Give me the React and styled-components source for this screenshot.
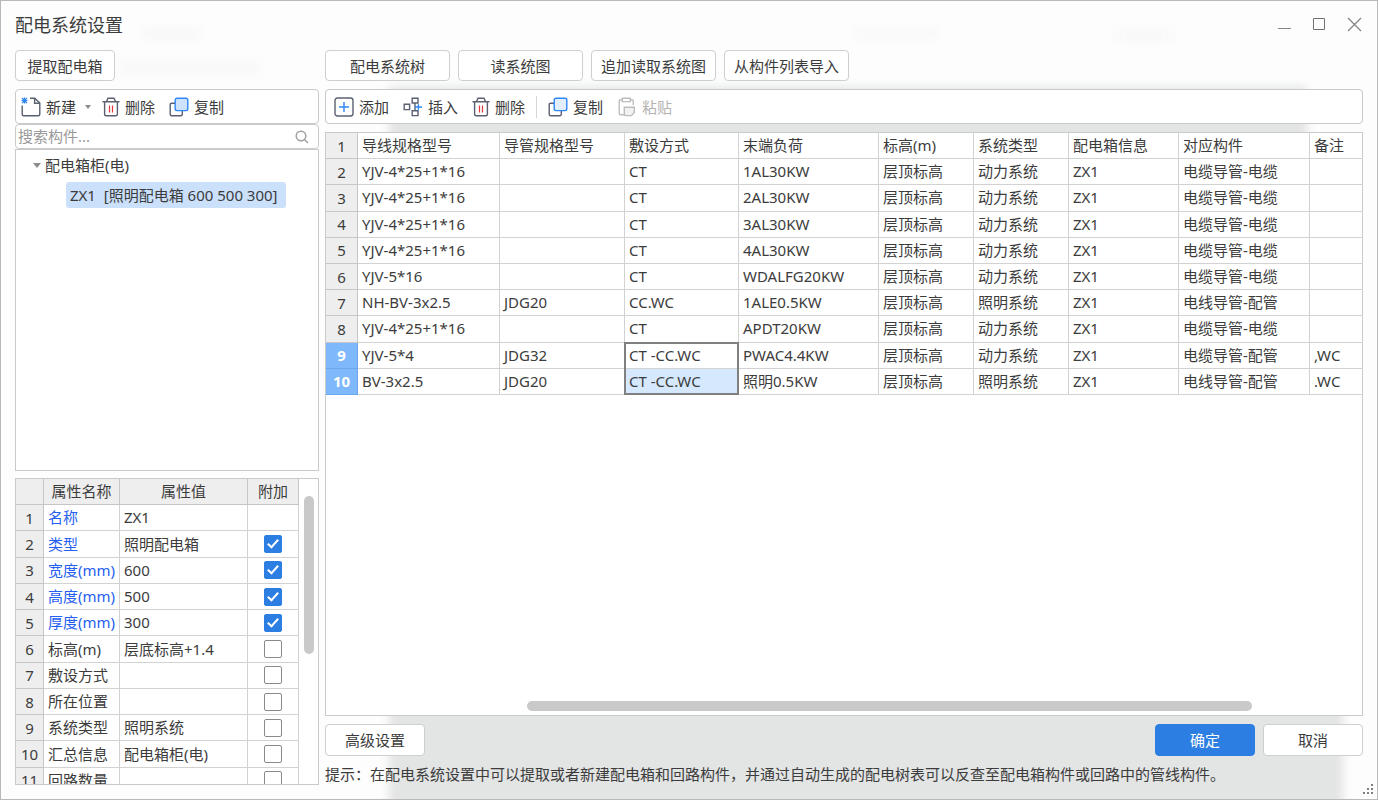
import React, { useState } from "react";
import styled, { createGlobalStyle, css } from "styled-components";

const GlobalStyle = createGlobalStyle`
  *, *::before, *::after { box-sizing: border-box; }
  body {
    margin: 0;
    background: #fff;
    color: #3c3c3c;
    font: 15px/20px "Noto Sans", "Noto Sans CJK SC", sans-serif;
  }
  button, input { font: inherit; color: inherit; }
`;

const LINE = "#d2d2d2";
const EDGE = "#c8cacb";

const Dialog = styled.main`
  position: relative;
  isolation: isolate;
  overflow: hidden;
  height: 100vh;
  display: flex;
  flex-direction: column;
  padding: 0 14px 14px;
  border: 1px solid #b9b9b9;
  background: #fdfdfd;
`;

const Haze = styled.div`
  position: absolute;
  z-index: -1;
  inset: ${(p) => p.$inset};
  width: ${(p) => (p.$width ? `${p.$width}px` : "auto")};
  height: ${(p) => (p.$height ? `${p.$height}px` : "auto")};
  background: ${(p) => p.$color || "#e3e4e4"};
  filter: blur(5px);
`;

const TitleBar = styled.header`
  display: flex;
  align-items: center;
  justify-content: space-between;
  height: 49px;
  flex: none;
  padding: 0 1px 2px 0;
`;

const Title = styled.h1`
  margin: 0;
  font-size: 18px;
  line-height: 24px;
  font-weight: 400;
`;

const WindowControls = styled.div`
  display: flex;
  gap: 20px;
`;

const ControlButton = styled.button`
  width: 15px;
  height: 15px;
  padding: 0;
  border: 0;
  background: none;
  svg { display: block; }
`;

const Columns = styled.div`
  flex: 1;
  min-height: 0;
  display: flex;
  gap: 6px;
`;

const LeftColumn = styled.section`
  width: 304px;
  flex: none;
  display: flex;
  flex-direction: column;
`;

const RightColumn = styled.section`
  flex: 1;
  min-width: 0;
  display: flex;
  flex-direction: column;
  gap: 8px;
`;

const ButtonRow = styled.div`
  display: flex;
  gap: 8px;
  margin-bottom: ${(p) => (p.$spaced ? 8 : 0)}px;
`;

const PushButton = styled.button`
  min-width: ${(p) => (p.$wide ? 125 : 100)}px;
  height: ${(p) => (p.$tall ? 32 : 31)}px;
  padding: 0 8px;
  border: 1px solid ${(p) => (p.$primary ? "#2c7ee2" : "#cdcfd0")};
  border-radius: 4px;
  background: ${(p) => (p.$primary ? "#2c7ee2" : "#fff")};
  color: ${(p) => (p.$primary ? "#fff" : "inherit")};
  white-space: nowrap;
`;

const Toolbar = styled.div`
  display: flex;
  align-items: center;
  gap: 14px;
  height: 35px;
  flex: none;
  padding: 0 5px 0 ${(p) => (p.$inset ? 8 : 5)}px;
  border: 1px solid ${EDGE};
  border-radius: 4px;
  background: #fff;
`;

const ToolButton = styled.button`
  display: flex;
  align-items: center;
  gap: 5px;
  padding: 0;
  border: 0;
  background: none;
  white-space: nowrap;
  &:disabled { color: #b4b4b4; }
`;

const NewButton = styled(ToolButton)`
  margin-right: -3px;
`;

const Caret = styled.span`
  border: ${(p) => (p.$menu ? 3 : 4)}px solid transparent;
  border-top: ${(p) => (p.$menu ? 4 : 5)}px solid #8c8c8c;
  border-bottom: 0;
  margin-left: ${(p) => (p.$menu ? 4 : 0)}px;
`;

const Separator = styled.span`
  width: 1px;
  height: 22px;
  margin: 0 -3px;
  background: #d6d6d6;
`;

const SearchBox = styled.label`
  display: flex;
  align-items: center;
  height: 25px;
  flex: none;
  padding: 0 9px 0 2px;
  border: 1px solid ${EDGE};
  border-radius: 4px;
  background: #fff;
`;

const SearchInput = styled.input`
  flex: 1;
  min-width: 0;
  height: 22px;
  padding: 0 0 2px;
  border: 0;
  outline: 0;
  background: none;
  &::placeholder { color: #9a9a9a; opacity: 1; }
`;

const TreePanel = styled.div`
  flex: 322 0 0;
  min-height: 0;
  padding: 0 17px;
  border: 1px solid ${EDGE};
  background: #fff;
`;

const TreeRow = styled.div`
  display: flex;
  align-items: center;
  gap: 4px;
  height: 30px;
  padding-left: ${(p) => (p.$depth ? 33 : 0)}px;
`;

const TreeChip = styled.span`
  min-width: 220px;
  padding: 3px 4px;
  border-radius: 3px;
  background: #cbe0fa;
  white-space: pre;
`;

const PropertyPanel = styled.div`
  flex: 307 0 0;
  min-height: 0;
  margin-top: 7px;
  display: flex;
  align-items: flex-start;
  overflow: hidden;
  border: 1px solid ${EDGE};
  background: #fff;
`;

const PropertyScroll = styled.div`
  flex: 1;
  align-self: stretch;
  display: flex;
  justify-content: center;
  padding-top: 17px;
`;

const Thumb = styled.div`
  border-radius: 5px;
  background: #c9c9c9;
  ${(p) =>
    p.$vertical
      ? css`width: 10px; height: 55%;`
      : css`height: 10px; width: 70%; margin-left: 19.4%;`}
`;

const SheetPanel = styled.div`
  flex: 1;
  min-height: 0;
  display: flex;
  flex-direction: column;
  justify-content: space-between;
  padding-bottom: 4px;
  border: 1px solid ${EDGE};
  background: #fff;
  overflow: hidden;
`;

const Table = styled.table`
  table-layout: fixed;
  border-collapse: separate;
  border-spacing: 0;
  flex: none;
  width: ${(p) => (p.$fill ? "100%" : "283px")};
  height: ${(p) => p.$height}px;
`;

const cell = css`
  height: 26px;
  padding: 0 0 1px 4px;
  border-right: 1px solid ${LINE};
  border-bottom: 1px solid ${LINE};
  text-align: left;
  font-weight: 400;
  white-space: nowrap;
`;

const Cell = styled.td`
  ${cell}
  ${(p) => p.$flush && css`border-right: 0;`}
  ${(p) => p.$blue && css`color: #2560f0;`}
  ${(p) => p.$center && css`padding: 0; text-align: center;`}
  ${(p) => p.$tint && css`background: #d5e8fd;`}
  ${(p) =>
    p.$outline &&
    css`
      position: relative;
      &::after {
        content: "";
        position: absolute;
        inset: -1px;
        border: 2px solid #808080;
        ${p.$outline === "top" ? "border-bottom: 0;" : "border-top: 0;"}
      }
    `}
`;

const HeadCell = styled.th`
  ${cell}
  &:last-child { border-right: 0; }
`;

const RowNumber = styled.th`
  ${cell}
  padding: 0;
  text-align: center;
  background: #eeeeee;
  border-color: #c6c6c6;
  ${(p) =>
    p.$selected &&
    css`
      background: #7fb9fb;
      border-color: #6aa7ec;
      color: #fff;
      font-weight: 700;
    `}
`;

const PropertyHead = styled.th`
  ${cell}
  padding: 0 0 1px;
  text-align: center;
  background: #eeeeee;
  border-color: #c6c6c6;
`;

const CheckBox = styled.input`
  appearance: none;
  display: block;
  position: relative;
  width: 18px;
  height: 18px;
  margin: 0 auto;
  border: 1px solid #8a8a8a;
  border-radius: 2px;
  background: #fff;
  &:checked {
    border-color: #2c7ee2;
    background: #2c7ee2;
  }
  &:checked::after {
    content: "";
    position: absolute;
    left: 5px;
    top: 1px;
    width: 6px;
    height: 11px;
    border: solid #fff;
    border-width: 0 2px 2px 0;
    transform: rotate(42deg);
  }
`;

const BottomBar = styled.div`
  display: flex;
  gap: 8px;
`;

const Spacer = styled.span`
  flex: 1;
`;

const Hint = styled.p`
  margin: 0;
  line-height: 21px;
  white-space: nowrap;
`;

const Grip = styled.svg`
  position: absolute;
  right: 2px;
  bottom: 3px;
`;

const Icon = ({ width = 20, children }) => (
  <svg width={width} height="20" viewBox={`0 0 ${width} 20`} fill="none" stroke="#5a6070" strokeWidth="1.4" aria-hidden="true">
    {children}
  </svg>
);

const NewIcon = () => (
  <Icon>
    <path d="M1.2 8.5V17.3q0 1.5 1.5 1.5H17.3q1.5 0 1.5-1.5V6L13.8 1.2H9M13.6 1.5V6.2H18.5" />
    <path d="M1 1l5 5M6 1L1 6M3.5 .5v6M.5 3.5h6" stroke="#2f86f5" strokeWidth="1.2" />
  </Icon>
);

const TrashIcon = () => (
  <Icon width={18}>
    <path d="M.5 4.7H17.5M4.5 4.5L6 1.2H12L13.5 4.5M2.6 5V17.3q0 1.5 1.5 1.5H13.9q1.5 0 1.5-1.5V5" />
    <path d="M7.5 8.5V15.5M10.5 8.5V15.5" stroke="#e8323c" strokeWidth="1.2" />
  </Icon>
);

const CopyIcon = ({ fill }) => (
  <Icon>
    <path d="M6 6.2H2.7Q1.2 6.2 1.2 7.7V17.3Q1.2 18.8 2.7 18.8H11.8Q13.3 18.8 13.3 17.3V14" />
    <rect x="6.2" y="1.2" width="12.6" height="12.4" rx="1.8" fill={fill} stroke="#2f86f5" />
  </Icon>
);

const AddIcon = () => (
  <Icon>
    <rect x="1" y="1" width="18" height="18" rx="2.4" />
    <path d="M10 5V15M5 10H15" stroke="#2f86f5" />
  </Icon>
);

const InsertIcon = () => (
  <Icon>
    <path d="M1.2 7.2H6.6V12.6H1.2ZM9.2 1.2H15V6H9.2ZM9.2 13.8H15V18.6H9.2ZM12 6V13.8" />
    <path d="M12 10H19M15.4 7.2V12.8" stroke="#2f86f5" />
  </Icon>
);

const PasteIcon = () => (
  <Icon>
    <g stroke="#bdbdbd">
      <path d="M8 17.8H3.7Q2.2 17.8 2.2 16.3V4.2Q2.2 2.7 3.7 2.7H5.2M13.3 2.7H14.8Q16.3 2.7 16.3 4.2V8" />
      <path d="M5.3 1.2H13.3V4.6H5.3Z" />
      <path d="M7.3 10.2H17.3V15.5L14.5 18.6H8.8Q7.3 18.6 7.3 17.1Z" fill="#f2f2f2" />
    </g>
  </Icon>
);

const SHEET_WIDTHS = [32, 142, 125, 114, 140, 95, 95, 110, 131, null];
const SHEET_HEAD = ["导线规格型号", "导管规格型号", "敷设方式", "末端负荷", "标高(m)", "系统类型", "配电箱信息", "对应构件", "备注"];
const SHEET_ROWS = [
  ["YJV-4*25+1*16", "", "CT", "1AL30KW", "层顶标高", "动力系统", "ZX1", "电缆导管-电缆", ""],
  ["YJV-4*25+1*16", "", "CT", "2AL30KW", "层顶标高", "动力系统", "ZX1", "电缆导管-电缆", ""],
  ["YJV-4*25+1*16", "", "CT", "3AL30KW", "层顶标高", "动力系统", "ZX1", "电缆导管-电缆", ""],
  ["YJV-4*25+1*16", "", "CT", "4AL30KW", "层顶标高", "动力系统", "ZX1", "电缆导管-电缆", ""],
  ["YJV-5*16", "", "CT", "WDALFG20KW", "层顶标高", "动力系统", "ZX1", "电缆导管-电缆", ""],
  ["NH-BV-3x2.5", "JDG20", "CC.WC", "1ALE0.5KW", "层顶标高", "照明系统", "ZX1", "电线导管-配管", ""],
  ["YJV-4*25+1*16", "", "CT", "APDT20KW", "层顶标高", "动力系统", "ZX1", "电缆导管-电缆", ""],
  ["YJV-5*4", "JDG32", "CT -CC.WC", "PWAC4.4KW", "层顶标高", "动力系统", "ZX1", "电缆导管-配管", ",WC"],
  ["BV-3x2.5", "JDG20", "CT -CC.WC", "照明0.5KW", "层顶标高", "照明系统", "ZX1", "电线导管-配管", ".WC"],
];

const PROPERTIES = [
  { name: "名称", value: "ZX1", blue: true, check: null },
  { name: "类型", value: "照明配电箱", blue: true, check: true },
  { name: "宽度(mm)", value: "600", blue: true, check: true },
  { name: "高度(mm)", value: "500", blue: true, check: true },
  { name: "厚度(mm)", value: "300", blue: true, check: true },
  { name: "标高(m)", value: "层底标高+1.4", check: false },
  { name: "敷设方式", value: "", check: false },
  { name: "所在位置", value: "", check: false },
  { name: "系统类型", value: "照明系统", check: false },
  { name: "汇总信息", value: "配电箱柜(电)", check: false },
  { name: "回路数量", value: "", check: false },
];

function PropertyTable() {
  const [checks, setChecks] = useState(PROPERTIES.map((p) => p.check));
  const toggle = (i) => setChecks(checks.map((c, j) => (j === i ? !c : c)));
  return (
    <Table $height={315}>
      <colgroup>
        <col width="28" />
        <col width="76" />
        <col width="128" />
        <col width="51" />
      </colgroup>
      <tbody>
        <tr>
          <PropertyHead />
          <PropertyHead scope="col">属性名称</PropertyHead>
          <PropertyHead scope="col">属性值</PropertyHead>
          <PropertyHead scope="col">附加</PropertyHead>
        </tr>
        {PROPERTIES.map((p, i) => (
          <tr key={p.name}>
            <RowNumber scope="row">{i + 1}</RowNumber>
            <Cell $blue={p.blue}>{p.name}</Cell>
            <Cell>{p.value}</Cell>
            <Cell $center>
              {p.check !== null && (
                <CheckBox type="checkbox" aria-label={p.name} checked={checks[i]} onChange={() => toggle(i)} />
              )}
            </Cell>
          </tr>
        ))}
      </tbody>
    </Table>
  );
}

function CircuitTable() {
  return (
    <Table $fill $height={262}>
      <colgroup>
        {SHEET_WIDTHS.map((w, i) => (
          <col key={i} width={w || undefined} />
        ))}
      </colgroup>
      <tbody>
        <tr>
          <RowNumber scope="row">1</RowNumber>
          {SHEET_HEAD.map((h) => (
            <HeadCell key={h} scope="col">{h}</HeadCell>
          ))}
        </tr>
        {SHEET_ROWS.map((row, r) => (
          <tr key={r}>
            <RowNumber scope="row" $selected={r >= 7}>{r + 2}</RowNumber>
            {row.map((text, c) => (
              <Cell
                key={c}
                $flush={c === row.length - 1}
                $tint={c === 2 && r === 8}
                $outline={c === 2 && r >= 7 ? (r === 7 ? "top" : "bottom") : undefined}
              >
                {text}
              </Cell>
            ))}
          </tr>
        ))}
      </tbody>
    </Table>
  );
}

export default function App() {
  return (
    <>
      <GlobalStyle />
      <Dialog>
        <Haze $inset="86px 70px 200px 388px" />
        <Haze $inset="400px 34px -20px 388px" />
        <Haze $inset="28px auto auto 142px" $color="#f7f7f7" $width={56} $height={10} />
        <Haze $inset="60px auto auto 118px" $color="#f8f8f8" $width={140} $height={14} />
        <Haze $inset="28px 440px auto auto" $color="#f8f8f8" $width={80} $height={10} />
        <Haze $inset="28px 205px auto auto" $color="#f8f8f8" $width={56} $height={12} />

        <TitleBar>
          <Title>配电系统设置</Title>
          <WindowControls>
            <ControlButton aria-label="最小化">
              <svg width="15" height="15" stroke="#858585"><path d="M1 11.5H14" /></svg>
            </ControlButton>
            <ControlButton aria-label="最大化">
              <svg width="15" height="15" fill="none" stroke="#707070"><path d="M1.5 1.5H12.5V12.5H1.5Z" /></svg>
            </ControlButton>
            <ControlButton aria-label="关闭">
              <svg width="15" height="15" stroke="#858585" strokeWidth="1.3"><path d="M1 1L14 14M14 1L1 14" /></svg>
            </ControlButton>
          </WindowControls>
        </TitleBar>

        <Columns>
          <LeftColumn>
            <ButtonRow $spaced>
              <PushButton>提取配电箱</PushButton>
            </ButtonRow>
            <Toolbar>
              <NewButton><NewIcon />新建<Caret $menu /></NewButton>
              <ToolButton><TrashIcon />删除</ToolButton>
              <ToolButton><CopyIcon fill="#cfe2fb" />复制</ToolButton>
            </Toolbar>
            <SearchBox>
              <SearchInput type="text" placeholder="搜索构件..." aria-label="搜索构件" />
              <svg width="14" height="14" fill="none" stroke="#a0a0a0" strokeWidth="1.5" aria-hidden="true">
                <circle cx="6" cy="6" r="4.8" />
                <path d="M9.5 9.5L13 13" />
              </svg>
            </SearchBox>
            <TreePanel>
              <TreeRow><Caret />配电箱柜(电)</TreeRow>
              <TreeRow $depth><TreeChip>{"ZX1  [照明配电箱 600 500 300]"}</TreeChip></TreeRow>
            </TreePanel>
            <PropertyPanel>
              <PropertyTable />
              <PropertyScroll><Thumb $vertical /></PropertyScroll>
            </PropertyPanel>
          </LeftColumn>

          <RightColumn>
            <ButtonRow>
              <PushButton $wide>配电系统树</PushButton>
              <PushButton $wide>读系统图</PushButton>
              <PushButton $wide>追加读取系统图</PushButton>
              <PushButton $wide>从构件列表导入</PushButton>
            </ButtonRow>
            <Toolbar $inset>
              <ToolButton><AddIcon />添加</ToolButton>
              <ToolButton><InsertIcon />插入</ToolButton>
              <ToolButton><TrashIcon />删除</ToolButton>
              <Separator />
              <ToolButton><CopyIcon fill="#e3eefd" />复制</ToolButton>
              <ToolButton disabled><PasteIcon />粘贴</ToolButton>
            </Toolbar>
            <SheetPanel>
              <CircuitTable />
              <Thumb />
            </SheetPanel>
            <BottomBar>
              <PushButton $tall>高级设置</PushButton>
              <Spacer />
              <PushButton $tall $primary>确定</PushButton>
              <PushButton $tall>取消</PushButton>
            </BottomBar>
            <Hint>提示：在配电系统设置中可以提取或者新建配电箱和回路构件，并通过自动生成的配电树表可以反查至配电箱构件或回路中的管线构件。</Hint>
          </RightColumn>
        </Columns>

        <Grip width="12" height="12" fill="#7d7d7d" aria-hidden="true">
          <path d="M8 0h2v2h-2zM8 4h2v2h-2zM4 4h2v2h-2zM8 8h2v2h-2zM4 8h2v2h-2zM0 8h2v2h-2z" />
        </Grip>
      </Dialog>
    </>
  );
}
